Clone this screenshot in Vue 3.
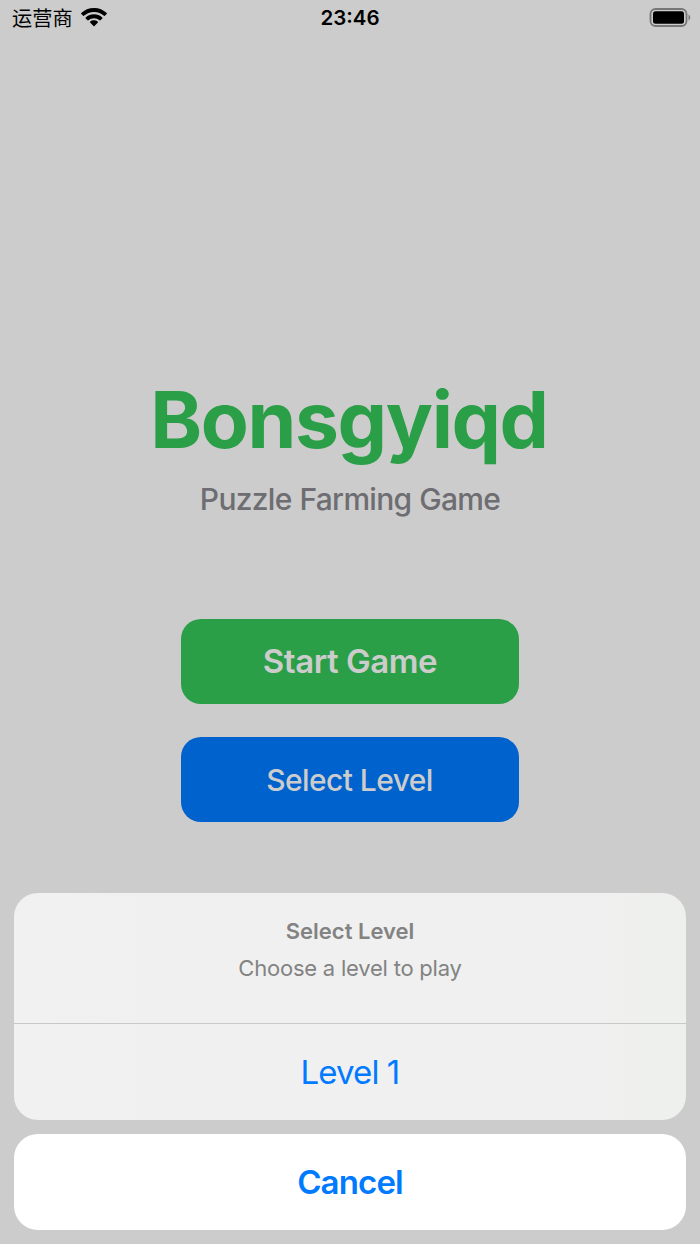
<template>
  <div class="screen">
    <header class="status-bar">
      <div class="carrier">
        <span>运营商</span>
        <svg class="wifi" viewBox="0 0 26 19">
          <path d="M13 0C8 0 3.500 1.900.3 5.100a.6.6 0 0 0 0 .8l1.900 1.900a.6.6 0 0 0 .8 0A14.500 14.500 0 0 1 13 4a14.500 14.500 0 0 1 10 3.800.6.6 0 0 0 .8 0l1.900-1.900a.6.6 0 0 0 0-.8A18 18 0 0 0 13 0Z" />
          <path d="M13 6.300c-3.200 0-6.100 1.200-8.300 3.200a.6.6 0 0 0 0 .9l1.900 1.900a.6.6 0 0 0 .8 0 8.500 8.500 0 0 1 11.200 0 .6.6 0 0 0 .8 0l1.900-1.900a.6.6 0 0 0 0-.9A12.300 12.300 0 0 0 13 6.300Z" />
          <path d="M13 12.300c-1.500 0-2.800.5-3.900 1.400a.6.6 0 0 0 0 .9l3.400 3.500a.7.7 0 0 0 1 0l3.400-3.500a.6.6 0 0 0 0-.9 6 6 0 0 0-3.900-1.400Z" />
        </svg>
      </div>
      <span class="time">23:46</span>
      <svg class="battery" viewBox="0 0 42 20">
        <rect class="shell" x="1.500" y="1" width="36" height="17" rx="5" />
        <rect x="4" y="3.200" width="31" height="12.600" rx="2.500" />
        <path class="cap" d="M39.500 6.500c1 .5 1.700 1.600 1.700 3s-.7 2.500-1.700 3Z" />
      </svg>
    </header>

    <main class="menu">
      <h1>Bonsgyiqd</h1>
      <p class="tagline">Puzzle Farming Game</p>
      <button class="start">Start Game</button>
      <button class="select">Select Level</button>
    </main>

    <section class="sheet">
      <div class="options">
        <div class="heading">
          <h2>Select Level</h2>
          <p>Choose a level to play</p>
        </div>
        <button v-for="level in levels" :key="level" class="level">{{ level }}</button>
      </div>
      <button class="cancel">Cancel</button>
    </section>
  </div>
</template>

<script setup>
const levels = ['Level 1'];
</script>

<style>
body {
  margin: 0;
}
</style>

<style scoped>
.screen {
  display: flex;
  flex-direction: column;
  box-sizing: border-box;
  height: 1244px;
  padding-bottom: 14px;
  overflow: hidden;
  background: #ccc;
  font-family: Inter, 'Noto Sans CJK SC', sans-serif;
}

h1,
h2,
p {
  margin: 0;
}

button {
  padding: 0;
  border: 0;
  font-family: inherit;
}

.status-bar {
  display: grid;
  grid-template-columns: 1fr auto 1fr;
  align-items: center;
  height: 36px;
  padding: 0 9px 0 12px;
}

.carrier {
  display: flex;
  align-items: center;
  gap: 8px;
  font-size: 20.2px;
  line-height: 34px;
}

.carrier span {
  padding-top: 2px;
}

.wifi {
  width: 26px;
  height: 19px;
  margin-bottom: 2px;
}

.time {
  margin-right: 3px;
  padding-bottom: 2px;
  font-size: 20.5px;
  font-weight: 600;
}

.battery {
  justify-self: end;
  width: 42px;
  height: 20px;
}

.shell {
  fill: none;
  stroke: #777;
  stroke-width: 1.8;
}

.cap {
  fill: #777;
}

.menu {
  display: flex;
  flex: 1;
  flex-direction: column;
  align-items: center;
  padding-top: 335px;
}

h1 {
  padding-right: 2px;
  color: #2a9f47;
  font-size: 78.5px;
  font-weight: 700;
  letter-spacing: -1.4px;
  line-height: 98px;
}

.tagline {
  margin-top: 11px;
  color: #6d6d72;
  font-size: 30px;
  font-weight: 500;
  letter-spacing: -0.7px;
  word-spacing: 0.5px;
  line-height: 38px;
}

.menu button {
  width: 338px;
  height: 85px;
  border-radius: 20px;
  color: #ccc;
}

.menu .start {
  margin-top: 101px;
  padding-bottom: 2px;
  background: #2a9f47;
  font-size: 33px;
  font-weight: 600;
  letter-spacing: -0.45px;
}

.menu .select {
  margin-top: 33px;
  padding-right: 1px;
  background: #0062cc;
  font-size: 30px;
  font-weight: 500;
  letter-spacing: -0.6px;
}

.sheet {
  display: flex;
  flex-direction: column;
  gap: 14px;
  padding: 0 14px;
}

.options {
  overflow: hidden;
  border-radius: 24px;
  background: linear-gradient(90deg, #f0f1f0, #f0f0f0 20%, #f0f0f0 80%, #eef0ed);
}

.heading {
  box-sizing: border-box;
  height: 130px;
  padding-top: 24px;
  color: #828382;
  text-align: center;
}

.heading h2 {
  font-size: 22px;
  font-weight: 600;
  line-height: 28px;
}

.heading p {
  margin-top: 9px;
  font-size: 22px;
  letter-spacing: -0.22px;
  line-height: 28px;
}

.level {
  display: block;
  width: 100%;
  height: 97px;
  border-top: 1px solid #c8c8c8;
  background: none;
  color: #007aff;
  font-size: 33px;
  letter-spacing: -0.9px;
}

.cancel {
  height: 96px;
  border-radius: 24px;
  background: #fff;
  color: #007aff;
  font-size: 33px;
  font-weight: 600;
  letter-spacing: -0.85px;
}
</style>
